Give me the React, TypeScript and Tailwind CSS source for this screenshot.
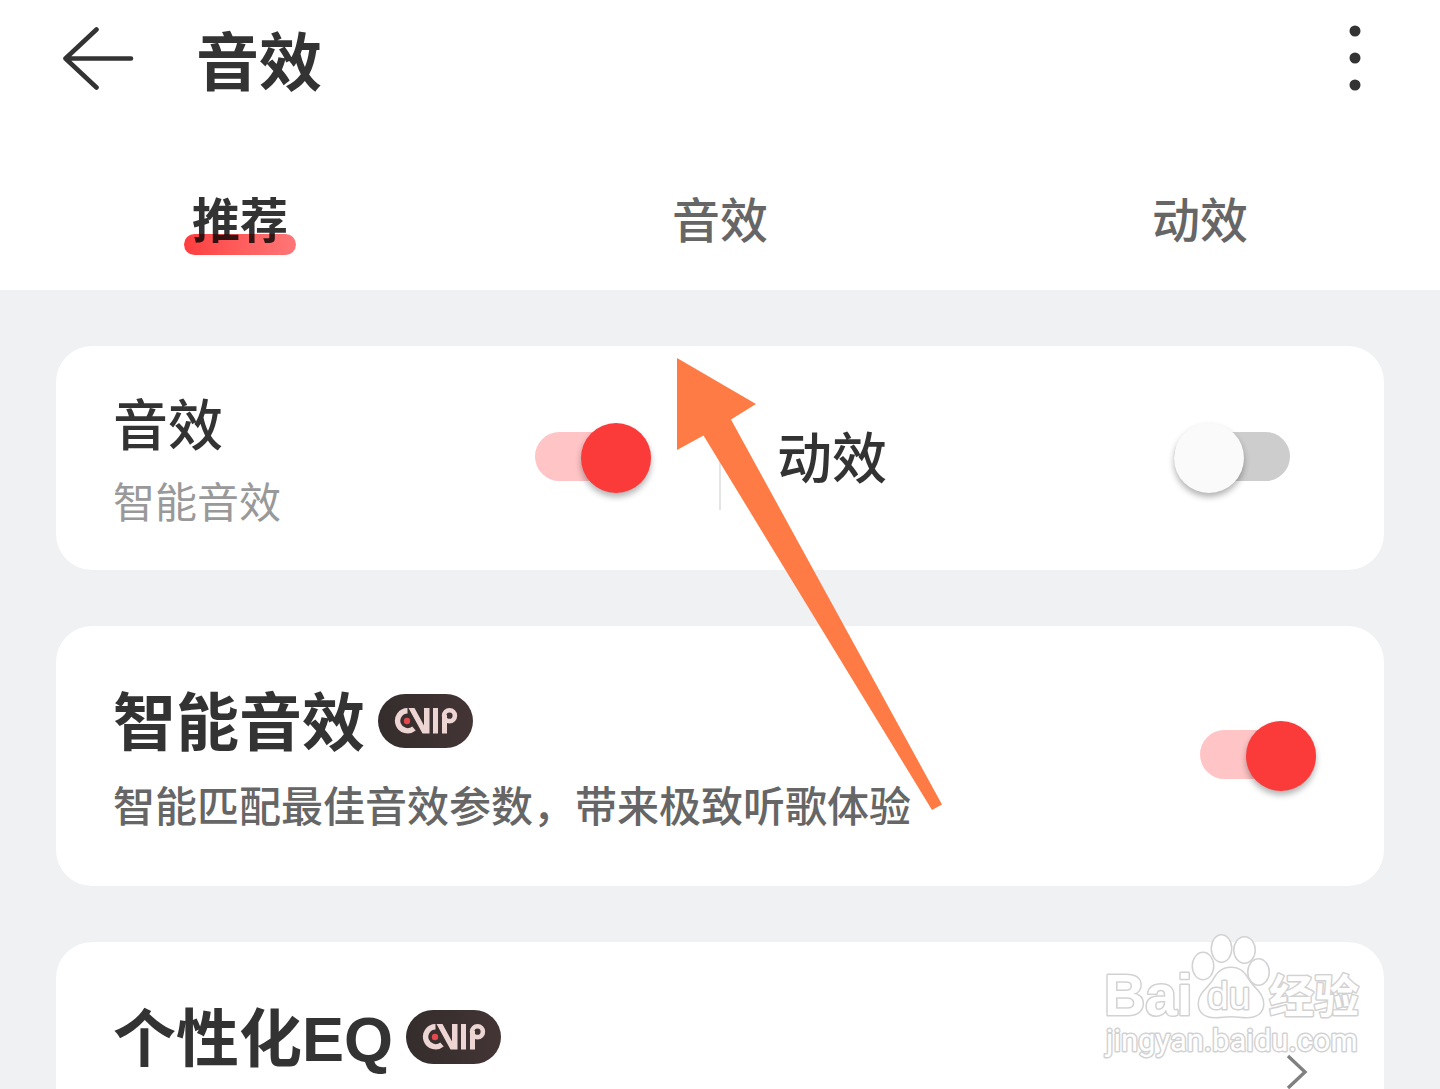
import { useState } from 'react';
import type { ReactNode } from 'react';
import clsx from 'clsx';

const TABS = ['推荐', '音效', '动效'];

function BackIcon() {
  return (
    <svg viewBox="0 0 72 64" className="h-16 w-[72px]" fill="none" stroke="#333" strokeWidth="4.6" strokeLinecap="round" strokeLinejoin="round">
      <path d="M34.5 3.5 3.5 32.500l31 29M3.500 32.500H69" />
    </svg>
  );
}

function MoreIcon() {
  return (
    <svg viewBox="0 0 12 66" className="h-[66px] w-3" fill="#333">
      <circle cx="6" cy="6" r="5.500" />
      <circle cx="6" cy="33" r="5.500" />
      <circle cx="6" cy="60" r="5.500" />
    </svg>
  );
}

function ChevronIcon() {
  return (
    <svg viewBox="0 0 22 36" className="h-9 w-[22px]" fill="none" stroke="#808080" strokeWidth="3.400">
      <path d="M2 2 19 18 2 34" />
    </svg>
  );
}

function VipBadge() {
  return (
    <span className="mb-1 flex h-[54px] w-[95px] items-center justify-center rounded-full bg-linear-to-r from-[#352d2d] via-[#3b3030] to-[#443535]">
      <svg viewBox="0 0 64 28" className="h-7 w-16" fill="none" stroke="#ecd5d2" role="img" aria-label="VIP">
        <path d="M13.500 3.800A10 10 0 1 0 20 21.500" strokeWidth="5.400" />
        <path d="M14.500 1H20.500L30 18.500V1H35.500V26.500H28.500Z" fill="#ecd5d2" stroke="none" />
        <path d="M41.500 1V26.500M50.500 8V26.500" strokeWidth="5" />
        <circle cx="55.500" cy="8.700" r="5.400" strokeWidth="4.600" />
        <circle cx="13" cy="14" r="3.200" fill="#e5484d" stroke="none" />
      </svg>
    </span>
  );
}

function Switch({ label, defaultChecked }: { label: string; defaultChecked?: boolean }) {
  return (
    <input
      type="checkbox"
      role="switch"
      aria-label={label}
      defaultChecked={defaultChecked}
      className="relative h-[70px] w-[116px] shrink-0 cursor-pointer appearance-none before:absolute before:inset-x-0 before:top-[9px] before:h-[49px] before:rounded-full before:bg-[#cdcdcd] after:absolute after:top-0 after:left-0 after:size-[70px] after:rounded-full after:bg-[#fafafa] after:shadow-[0_4px_6px_rgba(0,0,0,0.3)] checked:before:bg-[#ffc4c5] checked:after:left-[46px] checked:after:bg-[#fb3a3a]"
    />
  );
}

function FeatureCard({ title, desc, children }: { title: string; desc?: string; children: ReactNode }) {
  return (
    <section className="flex min-h-[260px] items-center justify-between rounded-[36px] bg-white py-[51px] pr-[68px] pl-[57px]">
      <div className="self-start">
        <div className="flex items-center gap-[13px]">
          <h2 className="font-['Liberation_Sans','Noto_Sans_CJK_SC',sans-serif] text-[63px] leading-[92px] font-bold">{title}</h2>
          <VipBadge />
        </div>
        {desc && <p className="mt-[10px] text-[42px] leading-[56px] font-medium text-[#666]">{desc}</p>}
      </div>
      {children}
    </section>
  );
}

function Pointer() {
  return (
    <svg viewBox="0 0 266 452" className="pointer-events-none absolute top-[358px] left-[677px] h-[452px] w-[266px]" fill="#ff7b45">
      <path d="M0 0 79 46 54 61.500 265 446.500 255 452 26.500 77.500 0 92Z" />
    </svg>
  );
}

function Watermark() {
  return (
    <svg
      viewBox="0 0 264 128"
      className="pointer-events-none absolute right-[74px] bottom-[29px] h-32 w-[264px]"
      fill="#fff"
      stroke="#d2d2d2"
      strokeWidth="3"
      strokeLinejoin="round"
      style={{ paintOrder: 'stroke' }}
    >
      <g strokeWidth="3">
        <ellipse cx="101" cy="34" rx="10" ry="13" />
        <ellipse cx="119.500" cy="16.500" rx="9.500" ry="13" />
        <ellipse cx="142.500" cy="18" rx="10" ry="12.500" />
        <ellipse cx="156.500" cy="40" rx="10" ry="12.500" />
        <path d="M129 36c10 0 14 6 18 13 5 8 14 12 14 23 0 9-7 13-16 13-6 0-10-1-16-1s-10 1-16 1c-9 0-16-4-16-13 0-11 9-15 14-23 4-7 8-13 18-13Z" />
      </g>
      <g fontFamily="'Liberation Sans', 'Noto Sans CJK SC', sans-serif" fontWeight="700">
        <text x="2" y="83" fontSize="57">Bai</text>
        <text x="105" y="77" fontSize="39" fontWeight="400">du</text>
        <text x="167" y="81" fontSize="45">经验</text>
      </g>
      <text x="4" y="119" fontSize="31" fontFamily="Roboto, sans-serif">jingyan.baidu.com</text>
    </svg>
  );
}

export default function App() {
  const [active, setActive] = useState(0);

  return (
    <div className="relative flex h-screen flex-col overflow-hidden bg-[#eff1f3] font-['Inter','Noto_Sans_CJK_SC',sans-serif] text-[#333]">
      <header className="shrink-0 bg-white">
        <div className="flex h-[116px] items-center pr-[79px] pl-[62px]">
          <button type="button" aria-label="返回">
            <BackIcon />
          </button>
          <h1 className="ml-[62px] pt-[8px] text-[63px] leading-[92px] font-bold">音效</h1>
          <button type="button" aria-label="更多" className="ml-auto">
            <MoreIcon />
          </button>
        </div>
        <div role="tablist" className="mt-[34px] grid h-[140px] grid-cols-3">
          {TABS.map((tab, i) => (
            <button
              key={tab}
              type="button"
              role="tab"
              aria-selected={active === i}
              onClick={() => setActive(i)}
              className={clsx('flex items-center justify-center pt-[2px] text-[48px] leading-[70px]', active === i ? 'font-bold' : 'font-medium text-[#666]')}
            >
              <span className="relative isolate px-2">
                {tab}
                {active === i && (
                  <span className="absolute inset-x-0 bottom-[1px] h-[21px] rounded-full bg-linear-to-r from-[#ff3c3e] to-[#ff7678] mix-blend-multiply" />
                )}
              </span>
            </button>
          ))}
        </div>
      </header>

      <main className="flex min-h-0 flex-1 flex-col gap-14 overflow-hidden px-14 pt-14 *:shrink-0">
        <section className="relative grid grid-cols-2 rounded-[36px] bg-white py-[39px]">
          <div className="flex items-center justify-between pr-[69px] pl-[57px]">
            <div>
              <h2 className="text-[55px] leading-[80px] font-medium">音效</h2>
              <p className="mt-[10px] text-[42px] leading-[56px] text-[#999]">智能音效</p>
            </div>
            <Switch label="音效" defaultChecked />
          </div>
          <div className="flex items-center justify-between pr-[94px] pl-[57px]">
            <h2 className="text-[55px] leading-[80px] font-medium">动效</h2>
            <Switch label="动效" />
          </div>
          <span className="absolute inset-y-[60px] left-1/2 w-[2px] -translate-x-1/2 bg-[#e5e5e5]" />
        </section>

        <FeatureCard title="智能音效" desc="智能匹配最佳音效参数，带来极致听歌体验">
          <Switch label="智能音效" defaultChecked />
        </FeatureCard>

        <FeatureCard title="个性化EQ">
          <button type="button" aria-label="个性化EQ" className="mr-2">
            <ChevronIcon />
          </button>
        </FeatureCard>
      </main>

      <Pointer />
      <Watermark />
    </div>
  );
}
